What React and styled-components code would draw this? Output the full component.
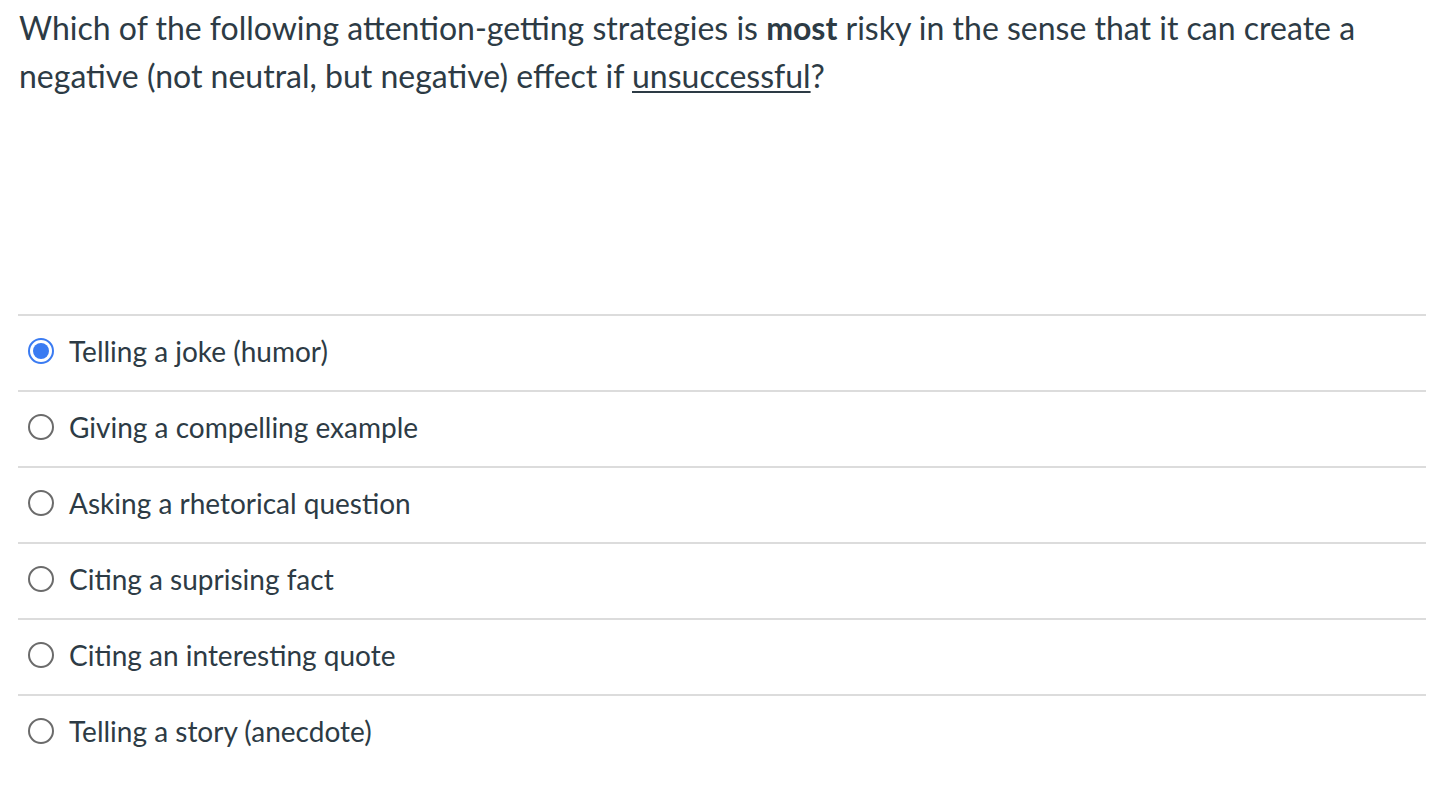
import React from 'react';
import styled, { createGlobalStyle } from 'styled-components';

const GlobalStyle = createGlobalStyle`
  html, body {
    margin: 0;
    padding: 0;
    background: #ffffff;
  }
  body {
    font-family: Lato, "Helvetica Neue", Arial, sans-serif;
    color: #2d3b45;
  }
`;

const Page = styled.div`
  padding: 4px 18px 0 18px;
  width: 1408px;
`;

const Question = styled.p`
  margin: 0;
  font-size: 32px;
  line-height: 48px;
  padding-left: 1px;
`;

const Underlined = styled.span`
  text-decoration: underline;
  text-underline-offset: 3px;
  text-decoration-thickness: 2px;
`;

const Answers = styled.div`
  margin-top: 214px;
  border-top: 2px solid #dcdcdc;
`;

const Answer = styled.label`
  display: flex;
  align-items: center;
  gap: 15px;
  height: 69px;
  padding: 0 0 5px 10px;
  border-bottom: 2px solid #dcdcdc;
  font-size: 28px;
  cursor: pointer;

  &:last-child {
    border-bottom: none;
  }
`;

const Radio = styled.span`
  box-sizing: border-box;
  width: 26px;
  height: 26px;
  border-radius: 50%;
  border: 2px solid ${(p) => (p.$checked ? '#3a7bf2' : '#6b6b6b')};
  display: flex;
  align-items: center;
  justify-content: center;
  flex-shrink: 0;

  &::after {
    content: '';
    width: 16px;
    height: 16px;
    border-radius: 50%;
    background: #3a7bf2;
    display: ${(p) => (p.$checked ? 'block' : 'none')};
  }
`;

const options = [
  'Telling a joke (humor)',
  'Giving a compelling example',
  'Asking a rhetorical question',
  'Citing a suprising fact',
  'Citing an interesting quote',
  'Telling a story (anecdote)',
];

const App = () => {
  return (
    <Page>
      <GlobalStyle />
      <Question>
        Which of the following attention-getting strategies is <strong>most</strong> risky in the sense that it can create a
        negative (not neutral, but negative) effect if <Underlined>unsuccessful</Underlined>?
      </Question>
      <Answers>
        {options.map((opt, i) => (
          <Answer key={opt}>
            <Radio $checked={i === 0} />
            {opt}
          </Answer>
        ))}
      </Answers>
    </Page>
  );
};

export default App;
